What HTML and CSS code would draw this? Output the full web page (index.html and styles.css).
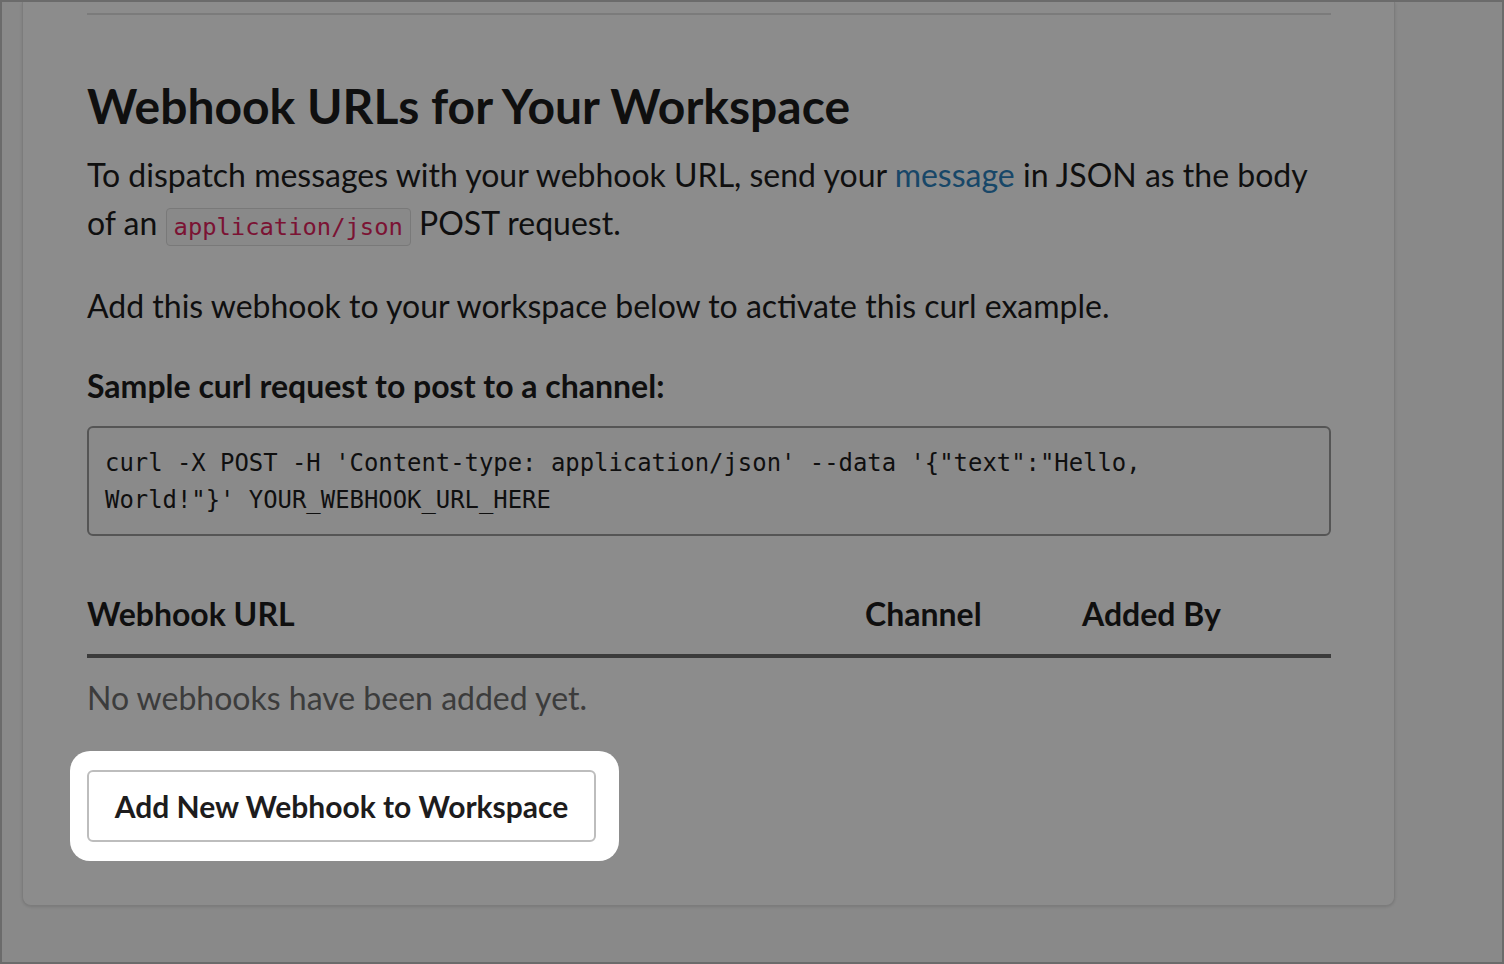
FILE: index.html
```html
<!DOCTYPE html>
<html lang="en">
<head>
<meta charset="utf-8">
<title>Incoming Webhooks</title>
<link rel="stylesheet" href="styles.css">
</head>
<body>
<div class="frame">
  <section class="card">
    <hr class="rule">
    <h1 class="title">Webhook URLs for Your Workspace</h1>
    <p class="text">To dispatch messages with your webhook URL, send your <a class="link" href="#">message</a> in JSON as the body of an <code class="inline-code">application/json</code> POST request.</p>
    <p class="text gap">Add this webhook to your workspace below to activate this curl example.</p>
    <h2 class="subtitle">Sample curl request to post to a channel:</h2>
    <pre class="code-block">curl -X POST -H 'Content-type: application/json' --data '{"text":"Hello,
World!"}' YOUR_WEBHOOK_URL_HERE</pre>
    <div class="table">
      <div class="table-head">
        <div class="th">Webhook URL</div>
        <div class="th">Channel</div>
        <div class="th">Added By</div>
      </div>
      <div class="empty">No webhooks have been added yet.</div>
    </div>
    <div class="spotlight">
      <button class="btn" type="button">Add New Webhook to Workspace</button>
    </div>
  </section>
</div>
</body>
</html>
```
FILE: styles.css
```css
html, body {
  margin: 0;
  padding: 0;
}
body {
  font-family: Lato, "Noto Sans", sans-serif;
  color: #1d1c1d;
}
.frame {
  width: 1504px;
  height: 964px;
  box-sizing: border-box;
  border: 2px solid #6b6b6b;
  background: #f9f9f9;
  overflow: hidden;
}
.card {
  width: 1373px;
  box-sizing: border-box;
  margin-left: 20px;
  background: #fff;
  border: 1px solid #e2e2e2;
  border-top: none;
  border-radius: 0 0 9px 9px;
  box-shadow: 0 1px 3px rgba(0, 0, 0, 0.12);
  padding: 11px 63px 44px 64px;
}
.rule {
  margin: 0;
  border: none;
  height: 2px;
  background: #e0e0e0;
}
.title {
  margin: 62px 0 0;
  font-size: 48px;
  line-height: 58px;
  font-weight: 700;
}
.text {
  margin: 16px 0 0;
  font-size: 32px;
  line-height: 48px;
}
.text.gap {
  margin-top: 35px;
}
.link {
  color: #2d82be;
  text-decoration: none;
}
.inline-code {
  display: inline-block;
  font-family: "DejaVu Sans Mono", monospace;
  font-size: 23.8px;
  line-height: 32px;
  color: #e0245e;
  background: #fafafa;
  border: 1px solid #dcdcdc;
  border-radius: 4px;
  padding: 2px 7px;
}
.subtitle {
  margin: 32px 0 0;
  font-size: 32px;
  line-height: 48px;
  font-weight: 700;
}
.code-block {
  margin: 16px 0 0;
  border: 2px solid #9b9b9b;
  border-radius: 6px;
  background: #fbfbfb;
  padding: 17px 16px 15px;
  font-family: "DejaVu Sans Mono", monospace;
  font-size: 23.9px;
  line-height: 37px;
  color: #1d1c1d;
  white-space: pre-wrap;
}
.table {
  margin-top: 54px;
}
.table-head {
  display: grid;
  grid-template-columns: 778px 217px 1fr;
  border-bottom: 4px solid #6c6c6c;
  padding-bottom: 16px;
}
.th {
  font-size: 32px;
  line-height: 48px;
  font-weight: 700;
}
.empty {
  padding-top: 16px;
  font-size: 32px;
  line-height: 48px;
  color: #6e6e6e;
}
.spotlight {
  position: relative;
  z-index: 1;
  display: inline-block;
  margin: 29px 0 0 -17px;
  padding: 19px 23px 19px 17px;
  background: #fff;
  border-radius: 20px;
  box-shadow: 0 0 0 3000px rgba(0, 0, 0, 0.45);
}
.btn {
  display: block;
  width: 509px;
  height: 72px;
  box-sizing: border-box;
  border: 2px solid #bdbdbd;
  border-radius: 6px;
  background: #fff;
  font-family: Lato, "Noto Sans", sans-serif;
  font-size: 30px;
  font-weight: 700;
  color: #1d1c1d;
  padding: 0;
}
```
